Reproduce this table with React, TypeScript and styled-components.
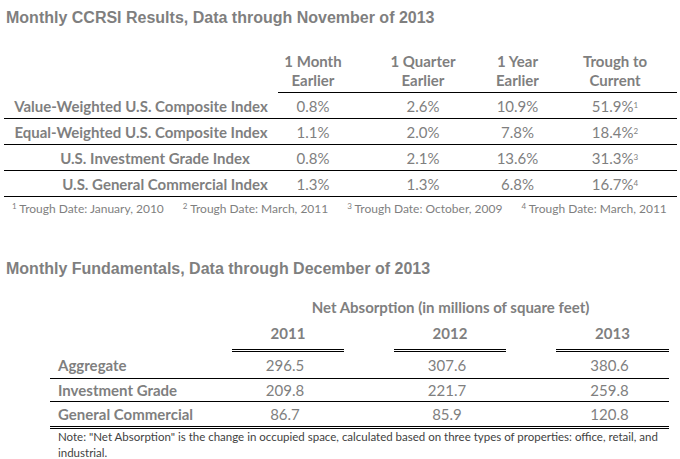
import styled, { createGlobalStyle } from "styled-components";

const GlobalStyle = createGlobalStyle`
  body {
    margin: 0;
    background: #fff;
  }
`;

const Page = styled.div`
  width: 680px;
  height: 459px;
  overflow: hidden;
  font-family: Lato, "Liberation Sans", sans-serif;
  font-size: 15px;
  color: #7f7f7f;
`;

const SectionTitle = styled.h2<{ $top: number }>`
  margin: ${(p) => p.$top}px 0 0 6px;
  font: bold 16px/18px "Liberation Sans", Arial, sans-serif;
  color: #7f7f7f;
`;

/* ---- CCRSI table ---- */

const Results = styled.div`
  margin: 25px 0 0 4px;
  width: 673px;
`;

const ResultsRow = styled.div<{ $head?: boolean }>`
  display: grid;
  grid-template-columns: 274px 90px 102px 95px 112px;
  align-items: center;
  border-bottom: ${(p) => (p.$head ? "none" : "1px solid #000")};
  height: ${(p) => (p.$head ? "auto" : "25px")};

  & > :nth-child(2) {
    padding-right: 20px;
  }
  & > :nth-child(3) {
    padding-left: 8px;
  }
  & > :nth-child(5) {
    padding-right: 12px;
  }
`;

const HeadCell = styled.div`
  align-self: stretch;
  text-align: center;
  font-weight: bold;
  line-height: 19px;
  padding-bottom: 2px;
  border-bottom: 1px solid #000;

  &:first-child {
    border-bottom: none;
  }
`;

const Label = styled.div<{ $shift: number }>`
  text-align: center;
  font-weight: bold;
  white-space: nowrap;
  padding-left: ${(p) => p.$shift * 2}px;
`;

const Value = styled.div`
  text-align: center;
`;

const Sup = styled.sup`
  font-size: 8px;
  vertical-align: 4px;
  line-height: 0;
`;

const Footnotes = styled.div`
  display: flex;
  gap: 19px;
  margin: 4px 0 0 12px;
  font-size: 12px;
  line-height: 16px;
  color: #7f7f7f;
`;

/* ---- Fundamentals table ---- */

const Fundamentals = styled.div`
  margin: 20px 0 0 50px;
  width: 619px;
`;

const FundRow = styled.div<{ $h?: number; $double?: boolean; $head?: boolean }>`
  display: grid;
  grid-template-columns: 132px 112px 112px 113px;
  column-gap: 50px;
  align-items: center;
  height: ${(p) => (p.$h ? `${p.$h}px` : "auto")};
  border-bottom: ${(p) =>
    p.$head ? "none" : p.$double ? "3px double #000" : "1px solid #000"};
`;

const SpanHead = styled.div`
  grid-column: 2 / -1;
  text-align: center;
  font-weight: bold;
  line-height: 18px;
`;

const YearCell = styled.div`
  text-align: center;
  font-weight: bold;
  line-height: 18px;
  padding-bottom: 7px;
  border-bottom: 3px double #000;
`;

const FundLabel = styled.div`
  padding-left: 8px;
  font-weight: bold;
  white-space: nowrap;
`;

const FundValue = styled.div`
  text-align: center;
  padding-right: 6px;
`;

const Note = styled.p`
  margin: 0 0 0 58px;
  width: 612px;
  font-size: 11.5px;
  line-height: 16px;
  color: #3f3f3f;
`;

const results = [
  { name: "Value-Weighted U.S. Composite Index", v: ["0.8%", "2.6%", "10.9%", "51.9%"], n: "1", shift: 0 },
  { name: "Equal-Weighted U.S. Composite Index", v: ["1.1%", "2.0%", "7.8%", "18.4%"], n: "2", shift: 0 },
  { name: "U.S. Investment Grade Index", v: ["0.8%", "2.1%", "13.6%", "31.3%"], n: "3", shift: 14 },
  { name: "U.S. General Commercial Index", v: ["1.3%", "1.3%", "6.8%", "16.7%"], n: "4", shift: 24 },
];

const notes = [
  { n: "1", text: "Trough Date: January, 2010" },
  { n: "2", text: "Trough Date: March, 2011" },
  { n: "3", text: "Trough Date: October, 2009" },
  { n: "4", text: "Trough Date: March, 2011" },
];

const fundamentals = [
  { name: "Aggregate", v: ["296.5", "307.6", "380.6"], h: 26 },
  { name: "Investment Grade", v: ["209.8", "221.7", "259.8"], h: 22 },
  { name: "General Commercial", v: ["86.7", "85.9", "120.8"], h: 24, double: true },
];

export default function App() {
  return (
    <Page>
      <GlobalStyle />
      <SectionTitle $top={9}>
        Monthly CCRSI Results, Data through November of 2013
      </SectionTitle>
      <Results>
        <ResultsRow $head>
          <HeadCell />
          <HeadCell>
            1 Month
            <br />
            Earlier
          </HeadCell>
          <HeadCell>
            1 Quarter
            <br />
            Earlier
          </HeadCell>
          <HeadCell>
            1 Year
            <br />
            Earlier
          </HeadCell>
          <HeadCell>
            Trough to
            <br />
            Current
          </HeadCell>
        </ResultsRow>
        {results.map((r) => (
          <ResultsRow key={r.name}>
            <Label $shift={r.shift}>{r.name}</Label>
            <Value>{r.v[0]}</Value>
            <Value>{r.v[1]}</Value>
            <Value>{r.v[2]}</Value>
            <Value>
              {r.v[3]}
              <Sup>{r.n}</Sup>
            </Value>
          </ResultsRow>
        ))}
      </Results>
      <Footnotes>
        {notes.map((f) => (
          <span key={f.n}>
            <Sup>{f.n}</Sup> {f.text}
          </span>
        ))}
      </Footnotes>

      <SectionTitle $top={43}>
        Monthly Fundamentals, Data through December of 2013
      </SectionTitle>
      <Fundamentals>
        <FundRow $head>
          <SpanHead>Net Absorption (in millions of square feet)</SpanHead>
        </FundRow>
        <FundRow $head style={{ marginTop: 8 }}>
          <div />
          <YearCell>2011</YearCell>
          <YearCell>2012</YearCell>
          <YearCell>2013</YearCell>
        </FundRow>
        {fundamentals.map((r) => (
          <FundRow key={r.name} $h={r.h} $double={r.double}>
            <FundLabel>{r.name}</FundLabel>
            {r.v.map((x, i) => (
              <FundValue key={i}>{x}</FundValue>
            ))}
          </FundRow>
        ))}
      </Fundamentals>
      <Note>
        Note: "Net Absorption" is the change in occupied space, calculated
        based on three types of properties: office, retail, and industrial.
      </Note>
    </Page>
  );
}
